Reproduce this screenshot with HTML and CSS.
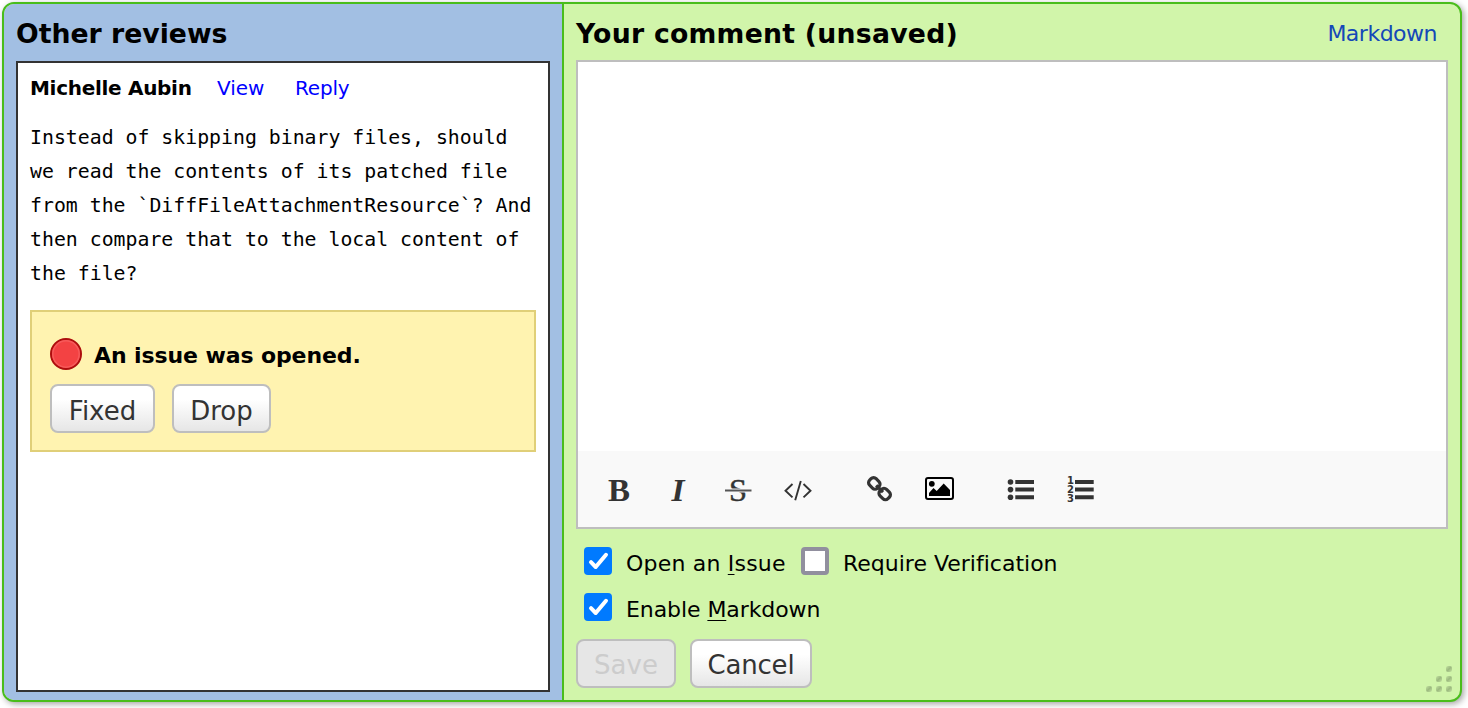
FILE: index.html
```html
<!DOCTYPE html>
<html lang="en">
<head>
<meta charset="utf-8">
<title>Comment</title>
<link rel="stylesheet" href="styles.css">
</head>
<body>
<main class="dialog">
  <section class="reviews">
    <h1 class="title title-reviews"><span>Other reviews</span></h1>
    <div class="review-list">
      <div class="byline"><b class="author">Michelle Aubin</b><a class="view">View</a><a class="reply">Reply</a></div>
      <pre class="comment-text">Instead of skipping binary files, should
we read the contents of its patched file
from the `DiffFileAttachmentResource`? And
then compare that to the local content of
the file?</pre>
      <div class="issue">
        <div class="issue-status">
          <svg class="issue-dot" width="32" height="32" viewBox="0 0 32 32"><circle cx="16" cy="16" r="15" fill="#f34243" stroke="#ad0d0d" stroke-width="2"/><circle cx="16" cy="16" r="13.2" fill="none" stroke="#f65a5a" stroke-width="1.5"/></svg>
          <span class="issue-label">An issue was opened.</span>
        </div>
        <div class="issue-actions"><button class="btn fixed"><span>Fixed</span></button><button class="btn drop"><span>Drop</span></button></div>
      </div>
    </div>
  </section>
  <section class="draft">
    <header class="draft-head"><h1 class="title title-draft"><span>Your comment (unsaved)</span></h1><a class="help">Markdown</a></header>
    <div class="editor">
      <div class="editor-text"></div>
      <div class="toolbar">
        <svg width="520" height="76" viewBox="578 451 520 76">
          <g fill="#333" font-family="Liberation Serif, serif">
            <text class="glyph-bold" x="608" y="500.5" textLength="22" lengthAdjust="spacingAndGlyphs">B</text>
            <text class="glyph-italic" x="671.5" y="500.5" textLength="13" lengthAdjust="spacingAndGlyphs">I</text>
            <text class="glyph-strike" x="729" y="500.5" textLength="18" lengthAdjust="spacingAndGlyphs" stroke="#333" stroke-width=".5">S</text>
          </g>
          <path d="M725 490.5h26.5" stroke="#f9f9f9" stroke-width="4"/>
          <path d="M725 490.5h26.5" stroke="#555" stroke-width="2"/>
          <path d="M792.5 484l-7 6.7 7 6.7M803.5 484l7 6.7-7 6.7M800.8 481l-5.6 19.3" fill="none" stroke="#333" stroke-width="1.9"/>
          <g fill="none" stroke="#333" stroke-width="3.2">
            <rect x="-5.6" y="-4.6" width="11.2" height="9.2" rx="3.6" transform="translate(874.3 483.4) rotate(45)"/>
            <rect x="-5.6" y="-4.6" width="11.2" height="9.2" rx="3.6" transform="translate(884.7 494) rotate(45)"/>
            <path d="M876.2 485.3l6.8 6.8"/>
          </g>
          <rect x="926" y="478" width="27" height="21" rx="2" fill="none" stroke="#000" stroke-width="2"/>
          <circle cx="931.8" cy="483.8" r="2.9"/>
          <path d="M929 496v-3l4.5-5 3.2 3 7-7.6 6.3 6.6v6z"/>
          <g fill="#333"><circle cx="1010.5" cy="482" r="2.8"/><circle cx="1010.5" cy="489.6" r="2.8"/><circle cx="1010.5" cy="497.2" r="2.8"/>
          <path d="M1015.3 480h18.7v4h-18.7zM1015.3 487.6h18.7v4h-18.7zM1015.3 495.2h18.7v4h-18.7zM1075 480h18.7v4H1075zM1075 487.6h18.7v4H1075zM1075 495.2h18.7v4H1075z"/>
          <g class="digits"><text x="1067" y="484">1</text><text x="1067" y="493.2">2</text><text x="1067" y="502.4">3</text></g></g>
        </svg>
      </div>
    </div>
    <div class="options">
      <div class="option-row">
        <svg class="check" width="28" height="28" viewBox="0 0 28 28"><rect width="28" height="28" rx="4" fill="#007aff"/><path d="M7 15.2l4.7 4.8L22 7.8" fill="none" stroke="#fff" stroke-width="4" stroke-linecap="round" stroke-linejoin="round"/></svg>
        <span class="label l-issue">Open an <u>I</u>ssue</span>
        <span class="check empty"></span>
        <span class="label l-verify">Require Verification</span>
      </div>
      <div class="option-row">
        <svg class="check" width="28" height="28" viewBox="0 0 28 28"><rect width="28" height="28" rx="4" fill="#007aff"/><path d="M7 15.2l4.7 4.8L22 7.8" fill="none" stroke="#fff" stroke-width="4" stroke-linecap="round" stroke-linejoin="round"/></svg>
        <span class="label l-md">Enable <u>M</u>arkdown</span>
      </div>
    </div>
    <div class="draft-actions"><button class="btn save" disabled><span>Save</span></button><button class="btn cancel"><span>Cancel</span></button></div>
    <svg class="grip" width="28" height="28" viewBox="0 0 28 28"><defs><linearGradient id="dot" x1="0" y1="0" x2="1" y2="1"><stop offset="0" stop-color="#c4e3a1"/><stop offset=".5" stop-color="#9dba80"/><stop offset="1" stop-color="#c4e3a1"/></linearGradient></defs><g fill="url(#dot)"><rect x="20" width="6" height="6" rx="2"/><rect x="10" y="10" width="6" height="6" rx="2"/><rect x="20" y="10" width="6" height="6" rx="2"/><rect y="20" width="6" height="6" rx="2"/><rect x="10" y="20" width="6" height="6" rx="2"/><rect x="20" y="20" width="6" height="6" rx="2"/></g></svg>
  </section>
</main>
</body>
</html>
```
FILE: styles.css
```css
* { box-sizing: border-box; }
body { margin: 0; padding: 2px; height: 708px; overflow: hidden; background: #fff; font-family: Verdana, "DejaVu Sans", sans-serif; font-variant-ligatures: none; color: #000; }
.dialog { position: relative; display: flex; width: 1460px; height: 700px; border: 2px solid #49bd1b; border-radius: 12px; box-shadow: 2px 2px 6px rgba(0,0,0,.36); background: #d1f5aa; }
.reviews { width: 560px; padding: 0 12px; border-right: 2px solid #49bd1b; border-radius: 10px 0 0 10px; background: #a2bfe3; }
.draft { width: 896px; padding: 0 12px; }
.title { margin: 0; height: 57px; line-height: 59px; font-size: 26.7px; white-space: nowrap; }
.title-draft { height: 56px; letter-spacing: .25px; }
.review-list { height: 631px; padding: 10px 12px; border: 2px solid #333; background: #fff; }
.byline { display: flex; height: 32px; line-height: 30px; font-size: 20px; white-space: nowrap; }
.author { width: 187px; letter-spacing: -.3px; }
.view { width: 78px; }
.view, .reply { color: #00f; }
.reply { letter-spacing: -.2px; }
.comment-text { margin: 16px 0 19px; font: 19.83px/34px "DejaVu Sans Mono", monospace; }
.issue { height: 142px; padding: 26px 18px; border: 2px solid #e0cf78; background: #fff3b0; }
.issue-status { display: flex; gap: 12px; height: 32px; line-height: 36px; font-size: 22px; font-weight: bold; letter-spacing: -.1px; white-space: nowrap; }
.issue-actions { display: flex; gap: 17px; margin-top: 14px; }
.btn { display: flex; justify-content: center; align-items: center; height: 49px; padding: 2px 0 0; border: 2px solid #bebebe; border-radius: 8px; background: linear-gradient(#fff 30%, #e6e6e6); color: #333; font: 26px "DejaVu Sans", sans-serif; }
.fixed { width: 105px; padding-top: 4px; }
.drop { width: 99px; padding-top: 4px; }
.draft-head { display: flex; justify-content: space-between; height: 56px; }
.help { padding-right: 11px; color: #1448b8; font-size: 22px; letter-spacing: -.5px; line-height: 59px; }
.editor { width: 872px; height: 469px; border: 2px solid #bebebe; background: #fff; }
.editor-text { height: 389px; }
.toolbar { height: 76px; background: #f9f9f9; }
.toolbar svg { display: block; }
.glyph-bold { font-size: 31px; font-weight: bold; }
.glyph-italic { font-size: 31px; font-weight: bold; font-style: italic; }
.glyph-strike { font-size: 31px; }
.digits { font: bold 10px "DejaVu Sans", sans-serif; }
.options { display: flex; flex-direction: column; gap: 18px; padding: 18px 8px 0; }
.option-row { display: flex; height: 28px; line-height: 33px; font-size: 22px; white-space: nowrap; }
.check { flex: none; width: 28px; height: 28px; margin-right: 14px; }
.empty { border: 4px solid #918f9e; border-radius: 4px; background: #fff; }
.label u { text-decoration: underline; text-decoration-thickness: 1px; text-underline-offset: 3px; }
.l-issue { width: 175px; letter-spacing: .2px; }
.l-md { letter-spacing: -.08px; }
.draft-actions { display: flex; gap: 14px; margin-top: 18px; }
.save { width: 100px; background: #e6e6e6; color: #ccc; }
.cancel { width: 122px; letter-spacing: -.2px; }
.grip { position: absolute; right: 6px; bottom: 6px; }
```
